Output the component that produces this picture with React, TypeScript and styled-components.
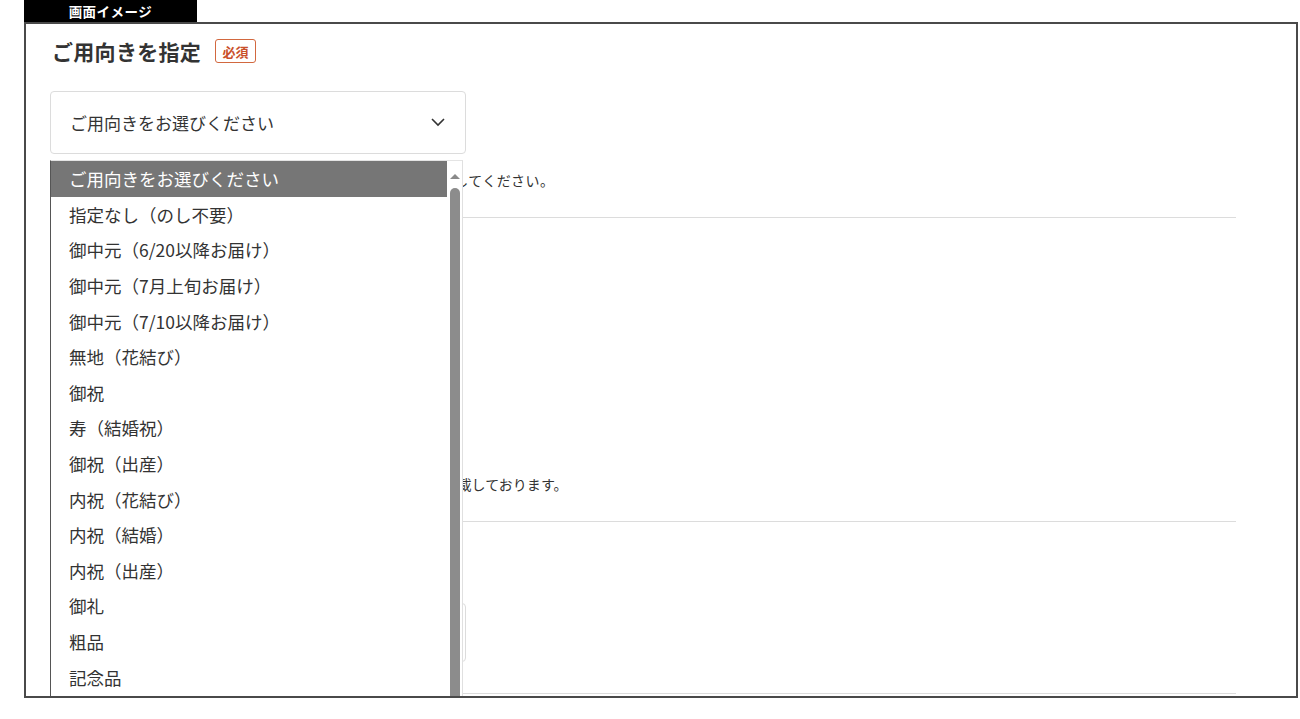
import React from "react";
import styled, { createGlobalStyle } from "styled-components";

const Global = createGlobalStyle`
  html, body { margin: 0; padding: 0; background: #fff; }
  body { font-family: "Noto Sans CJK JP", "Noto Sans", sans-serif; color: #333; }
  * { box-sizing: border-box; }
`;

const Page = styled.div`
  width: 1300px;
  height: 719px;
  padding-left: 24px;
  display: flex;
  flex-direction: column;
`;

const Tab = styled.div`
  width: 173px;
  height: 22px;
  background: #000;
  color: #fff;
  font-size: 13.5px;
  font-weight: 700;
  line-height: 22px;
  text-align: center;
  letter-spacing: 0.5px;
`;

const Frame = styled.div`
  width: 1274px;
  height: 676px;
  border: 2px solid #4a4a4a;
  overflow: hidden;
  padding: 0 60px 0 24px;
`;

const Section = styled.section<{ $pt: number; $pb: number }>`
  padding-top: ${(p) => p.$pt}px;
  padding-bottom: ${(p) => p.$pb}px;
  border-bottom: 1px solid #dcdcdc;
  display: flex;
  flex-direction: column;
  align-items: flex-start;
`;

const TitleRow = styled.div`
  display: flex;
  align-items: center;
  gap: 14px;
  height: 30px;
  padding-left: 2px;
`;

const Title = styled.h2`
  margin: 0;
  font-size: 21px;
  font-weight: 700;
  color: #333;
  letter-spacing: 0.3px;
`;

const Badge = styled.span`
  display: inline-flex;
  align-items: center;
  justify-content: center;
  width: 41px;
  height: 24px;
  border: 1px solid #d2683f;
  border-radius: 3px;
  color: #c9502a;
  font-size: 13px;
  font-weight: 700;
`;

const SelectWrap = styled.div`
  position: relative;
  margin-top: 25px;
`;

const SelectBox = styled.div`
  width: 416px;
  height: 63px;
  border: 1px solid #dcdcdc;
  border-radius: 4px;
  display: flex;
  align-items: center;
  justify-content: space-between;
  padding: 0 20px 0 19px;
  font-size: 17px;
  color: #333;
`;

const Dropdown = styled.div`
  position: absolute;
  top: 69px;
  left: 0;
  width: 413px;
  height: 560px;
  background: #fff;
  border-left: 1px solid #555;
  border-top: 1px solid #e4e4e4;
  border-right: 1px solid #e0e0e0;
  display: flex;
  z-index: 10;
`;

const OptionList = styled.ul`
  list-style: none;
  margin: 0;
  padding: 0;
  width: 396px;
`;

const Option = styled.li<{ $active?: boolean }>`
  height: 35.6px;
  display: flex;
  align-items: center;
  padding-left: 18px;
  font-size: 17.5px;
  white-space: nowrap;
  background: ${(p) => (p.$active ? "#767676" : "#fff")};
  color: ${(p) => (p.$active ? "#fff" : "#333")};
`;

const ScrollTrack = styled.div`
  flex: 1;
  display: flex;
  flex-direction: column;
  align-items: center;
  padding-top: 13px;
`;

const ScrollArrow = styled.div`
  width: 0;
  height: 0;
  border-left: 5px solid transparent;
  border-right: 5px solid transparent;
  border-bottom: 5px solid #8a8a8a;
`;

const ScrollThumb = styled.div`
  margin-top: 9px;
  width: 10px;
  flex: 1;
  background: #8c8c8c;
  border-radius: 5px 5px 0 0;
`;

const Note = styled.p<{ $mt: number; $ls: number }>`
  margin: ${(p) => p.$mt}px 0 0 2px;
  font-size: 14px;
  line-height: 20px;
  letter-spacing: ${(p) => p.$ls}px;
  color: #333;
  white-space: nowrap;
`;

const RadioGroup = styled.div`
  margin-top: 18px;
  display: flex;
  flex-direction: column;
`;

const RadioRow = styled.label`
  height: 36px;
  display: flex;
  align-items: center;
  gap: 8px;
  font-size: 15px;
`;

const Radio = styled.span`
  width: 16px;
  height: 16px;
  border: 1px solid #999;
  border-radius: 50%;
`;

const TextInput = styled.div`
  margin-top: 27px;
  width: 416px;
  height: 59px;
  border: 1px solid #dcdcdc;
  border-radius: 4px;
`;

const Chevron = () => (
  <svg width="14" height="9" viewBox="0 0 14 9" fill="none">
    <polyline points="1,1 7,7 13,1" stroke="#333" strokeWidth="1.6" />
  </svg>
);

const options = [
  "ご用向きをお選びください",
  "指定なし（のし不要）",
  "御中元（6/20以降お届け）",
  "御中元（7月上旬お届け）",
  "御中元（7/10以降お届け）",
  "無地（花結び）",
  "御祝",
  "寿（結婚祝）",
  "御祝（出産）",
  "内祝（花結び）",
  "内祝（結婚）",
  "内祝（出産）",
  "御礼",
  "粗品",
  "記念品",
  "御見舞御礼",
];

export default function App() {
  return (
    <>
      <Global />
      <Page>
        <Tab>画面イメージ</Tab>
        <Frame>
          <Section $pt={12} $pb={27}>
            <TitleRow>
              <Title>ご用向きを指定</Title>
              <Badge>必須</Badge>
            </TitleRow>
            <SelectWrap>
              <SelectBox>
                <span>ご用向きをお選びください</span>
                <Chevron />
              </SelectBox>
              <Dropdown>
                <OptionList>
                  {options.map((o, i) => (
                    <Option key={o} $active={i === 0}>
                      {o}
                    </Option>
                  ))}
                </OptionList>
                <ScrollTrack>
                  <ScrollArrow />
                  <ScrollThumb />
                </ScrollTrack>
              </Dropdown>
            </SelectWrap>
            <Note $mt={16} $ls={0.4}>
              ※ご注文をギフトとしてお贈りになる場合は、ご用向きを指定してください。
            </Note>
          </Section>
          <Section $pt={24} $pb={27}>
            <TitleRow>
              <Title>お名入れ</Title>
            </TitleRow>
            <RadioGroup>
              <RadioRow>
                <Radio />
                名入れなし
              </RadioRow>
              <RadioRow>
                <Radio />
                名入れあり
              </RadioRow>
            </RadioGroup>
            <Note $mt={112} $ls={0.02}>
              ※名入れの書体や配置につきましては、商品ページにて詳細を記載しております。
            </Note>
          </Section>
          <Section $pt={24} $pb={31}>
            <TitleRow>
              <Title>お名前</Title>
            </TitleRow>
            <TextInput />
          </Section>
        </Frame>
      </Page>
    </>
  );
}
